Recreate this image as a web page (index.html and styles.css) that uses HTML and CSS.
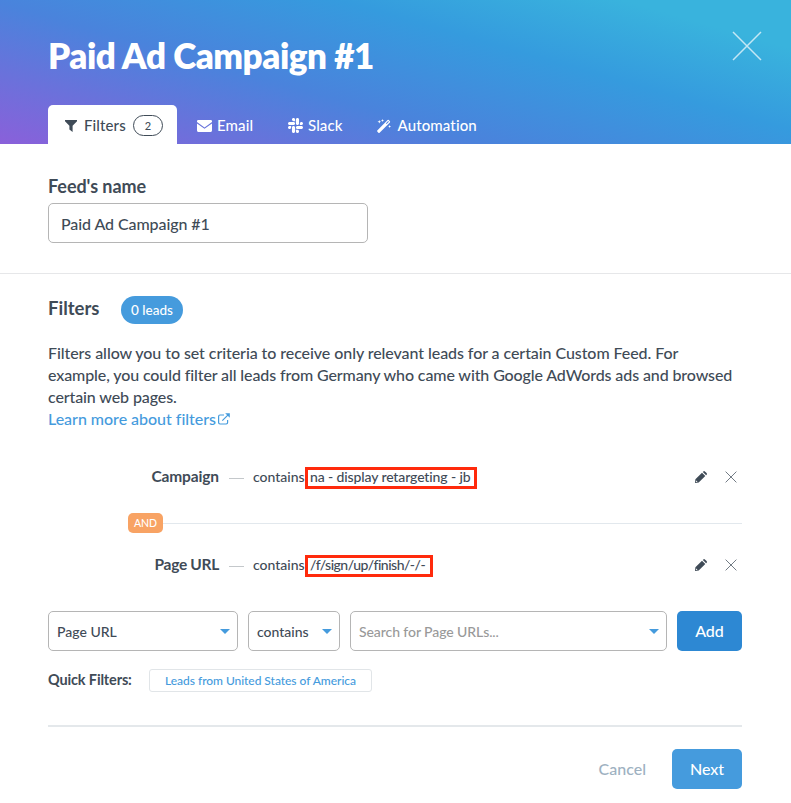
FILE: index.html
```html
<!DOCTYPE html>
<html lang="en">
<head>
<meta charset="utf-8">
<title>Paid Ad Campaign #1</title>
<link rel="stylesheet" href="styles.css">
</head>
<body>
<header class="header">
  <div class="title-row">
    <h1 class="title">Paid Ad Campaign #1</h1>
    <svg class="close" viewBox="0 0 30 30"><path d="M1 1l28 28M29 1L1 29"/></svg>
  </div>
  <nav class="tabs">
    <a class="tab tab-active"><svg class="i-funnel" viewBox="0 0 12 12"><path d="M0 0h12v1.2L7.6 5.8V12L4.4 9.4V5.8L0 1.2z"/></svg><span class="t-filters">Filters</span><span class="count">2</span></a>
    <a class="tab tab-email"><svg class="i-mail" viewBox="0 0 15 12"><path d="M1.2 0h12.6Q15 0 15 1.2v.7L7.5 7.4 0 1.9v-.7Q0 0 1.2 0zM0 3.4l7.5 5.4L15 3.4v7.2q0 1.4-1.2 1.4H1.2Q0 12 0 10.6z"/></svg><span>Email</span></a>
    <a class="tab tab-slack"><svg class="i-slack" viewBox="0 32 448 448"><path d="M94.12 315.1c0 25.9-21.16 47.06-47.06 47.06S0 341 0 315.1c0-25.9 21.16-47.06 47.06-47.06h47.06v47.06zm23.72 0c0-25.9 21.16-47.06 47.06-47.06s47.06 21.16 47.06 47.06v117.84c0 25.9-21.16 47.06-47.06 47.06s-47.06-21.16-47.06-47.06V315.1zm47.06-188.98c-25.9 0-47.06-21.16-47.06-47.06S139 32 164.9 32s47.06 21.16 47.06 47.06v47.06H164.9zm0 23.72c25.9 0 47.06 21.16 47.06 47.06s-21.16 47.06-47.06 47.06H47.06C21.16 243.96 0 222.8 0 196.9s21.16-47.06 47.06-47.06H164.9zm188.98 47.06c0-25.9 21.16-47.06 47.06-47.06 25.9 0 47.06 21.16 47.06 47.06s-21.16 47.06-47.06 47.06h-47.06V196.9zm-23.72 0c0 25.9-21.16 47.06-47.06 47.06-25.9 0-47.06-21.16-47.06-47.06V79.06c0-25.9 21.16-47.06 47.06-47.06 25.9 0 47.06 21.16 47.06 47.06V196.9zM283.1 385.88c25.9 0 47.06 21.16 47.06 47.06 0 25.9-21.16 47.06-47.06 47.06-25.9 0-47.06-21.16-47.06-47.06v-47.06h47.06zm0-23.72c-25.9 0-47.06-21.16-47.06-47.06 0-25.9 21.16-47.06 47.06-47.06h117.84c25.9 0 47.06 21.16 47.06 47.06 0 25.9-21.16 47.06-47.06 47.06H283.1z"/></svg><span>Slack</span></a>
    <a class="tab tab-auto"><svg class="i-wand" viewBox="0 0 14 14"><path fill-rule="evenodd" d="M.3 11.400L10.600 1.100q.6-.5 1.200 0l1.100 1.100q.5.6 0 1.200L2.600 13.700q-.6.5-1.200 0L.3 12.600q-.5-.6 0-1.200zM8.900 4.400l.7.7 2.300-2.300-.7-.7zM5.500 0l.4 1.100 1.100.4-1.100.4-.4 1.100-.4-1.100L4 1.500l1.100-.4zM2.300.9l.5 1.300 1.300.5-1.300.5-.5 1.300-.5-1.300L.5 2.700l1.300-.5zM12.600 6l.4 1.100 1 .4-1 .4-.4 1.100-.4-1.100-1-.4 1-.4z"/></svg><span>Automation</span></a>
  </nav>
</header>
<main>
  <section class="name-section">
    <label class="name-label" for="feed">Feed's name</label>
    <input class="name-input" id="feed" type="text" value="Paid Ad Campaign #1">
  </section>
  <section class="filters">
    <div class="filters-head"><h2 class="filters-title">Filters</h2><span class="leads">0 leads</span></div>
    <p class="desc"><span class="desc-first">Filters allow you to set criteria to receive only relevant leads for a certain Custom Feed. For</span><br>example, you could filter all leads from Germany who came with Google AdWords ads and browsed<br>certain web pages.</p>
    <a class="learn"><span>Learn more about filters</span><svg class="i-ext" viewBox="0 0 12 12"><path d="M6 2H2Q.6 2 .6 3.400v6.200Q.6 11 2 11h6.200q1.400 0 1.400-1.400V7M4.300 7.700L10.600 1.400"/><path class="solid" d="M7.200.2h4.600v4.600z"/></svg></a>
    <div class="rule">
      <span class="field">Campaign</span><span class="dash"></span><span class="op">contains</span><span class="value">na - display retargeting - jb</span>
      <span class="actions"><svg class="i-pen" viewBox="0 0 12 12"><path fill-rule="evenodd" d="M0 12l.4-3.700L7 1.700l3.300 3.300-6.600 6.600zM7.800.9l.5-.5q.8-.7 1.600 0l1.700 1.700q.7.8 0 1.600l-.5.5zM1.100 9.600l-.2 1.500 1.500-.2-.2-.5-.6-.1-.1-.6z"/></svg><svg class="i-x" viewBox="0 0 12 12"><path d="M.6.6l10.800 10.800M11.400.6L.6 11.400"/></svg></span>
    </div>
    <div class="joiner"><span class="and">AND</span><span class="joiner-line"></span></div>
    <div class="rule">
      <span class="field field-url">Page URL</span><span class="dash"></span><span class="op">contains</span><span class="value value-url">/f/sign/up/finish/-/-</span>
      <span class="actions"><svg class="i-pen" viewBox="0 0 12 12"><path fill-rule="evenodd" d="M0 12l.4-3.700L7 1.700l3.300 3.300-6.600 6.600zM7.800.9l.5-.5q.8-.7 1.600 0l1.700 1.700q.7.8 0 1.600l-.5.5zM1.100 9.600l-.2 1.500 1.500-.2-.2-.5-.6-.1-.1-.6z"/></svg><svg class="i-x" viewBox="0 0 12 12"><path d="M.6.6l10.800 10.800M11.400.6L.6 11.400"/></svg></span>
    </div>
    <div class="builder">
      <div class="select select-field"><span>Page URL</span><i class="caret"></i></div>
      <div class="select select-op"><span>contains</span><i class="caret"></i></div>
      <div class="select select-search"><span>Search for Page URLs...</span><i class="caret"></i></div>
      <button class="btn btn-add">Add</button>
    </div>
    <div class="quick"><span class="quick-label">Quick Filters:</span><a class="quick-item">Leads from United States of America</a></div>
  </section>
  <footer class="footer"><a class="cancel">Cancel</a><button class="btn btn-next">Next</button></footer>
</main>
</body>
</html>
```
FILE: styles.css
```css
* { box-sizing: border-box; }
body {
  margin: 0;
  height: 803px;
  overflow: hidden;
  background: #fff;
  color: #3f4b57;
  font: 500 15px/22px Lato, "Liberation Sans", sans-serif;
}
svg { display: block; flex: none; fill: currentColor; }
.header {
  height: 144px;
  padding: 0 29px 0 48px;
  display: flex;
  flex-direction: column;
  background: linear-gradient(16deg, #8a60da 0%, #4a83dc 38%, #359bde 65%, #39b3dd 87%);
  color: #fff;
}
.title-row { display: flex; height: 105px; justify-content: space-between; align-items: flex-start; }
.title { margin: 34px 0 0; font-size: 35px; line-height: 42px; font-weight: 800; letter-spacing: -.47px; }
.close { width: 30px; height: 30px; margin-top: 31px; fill: none; stroke: rgba(255, 255, 255, .7); stroke-width: 1.5; }
.tabs { display: flex; height: 39px; letter-spacing: .12px; }
.tab { display: flex; align-items: center; padding-top: 2px; }
.tab span { margin-top: -1px; }
.tab-active { width: 129px; padding-left: 17px; border-radius: 5px 5px 0 0; background: #fff; color: #3f4b57; }
.i-funnel { width: 12px; height: 12px; }
.tab .t-filters { width: 42px; margin-left: 7px; }
.tab .count { width: 30px; height: 21px; margin: 0 0 0 7px; border: 1px solid #3f4b57; border-radius: 11px; font-size: 11px; line-height: 19px; text-align: center; }
.tab-email { margin-left: 20px; width: 91px; gap: 5px; }
.i-mail { width: 15px; height: 12px; }
.tab-slack { width: 89px; gap: 5px; }
.i-slack { width: 15px; height: 15px; }
.tab-auto { gap: 6.500px; }
.i-wand { width: 14px; height: 14px; }

.name-section { height: 130px; padding: 31px 48px 0; border-bottom: 1px solid #e6e7e9; }
.name-label { display: block; height: 28px; font-size: 18px; line-height: 22px; font-weight: 700; letter-spacing: -.05px; }
.name-input { display: block; width: 320px; height: 40px; padding: 1px 12px 0; border: 1px solid #b5b5b5; border-radius: 5px; background: #fff; color: inherit; font: inherit; font-size: 16px; letter-spacing: -.08px; outline: 0; }

.filters { height: 451px; padding: 22px 49px 0 48px; }
.filters-head { display: flex; height: 28px; }
.filters-title { width: 73px; margin: 1px 0 0; font-size: 18.500px; line-height: 22px; font-weight: 700; }
.leads { width: 62px; height: 28px; border-radius: 14px; background: #459bdd; color: #fff; font-size: 13.500px; line-height: 28px; text-align: center; }
.desc { margin: 18px 0 0; font-size: 16px; letter-spacing: -.11px; white-space: nowrap; }
.desc-first { letter-spacing: -.07px; }
.learn { display: flex; height: 22px; align-items: center; gap: 2px; color: #459bdd; font-size: 16px; letter-spacing: -.03px; }
.i-ext { width: 12px; height: 12px; fill: none; stroke: currentColor; stroke-width: 1.200; }
.i-ext .solid { fill: currentColor; stroke: none; }
.rule { display: flex; height: 22px; align-items: center; font-size: 14px; }
.learn + .rule { margin-top: 36px; }
.field { width: 171px; text-align: right; font-size: 15.500px; line-height: 20px; margin-top: -2px; font-weight: 700; letter-spacing: -.13px; }
.field-url { letter-spacing: -.3px; }
.dash { width: 15px; height: 1px; margin: 2px 9px 0 10px; background: #c4c8cb; }
.op { width: 52px; }
.value { width: 172px; height: 22px; margin-top: 1px; padding-left: 2px; border: 3px solid #ff2a0c; line-height: 14px; letter-spacing: -.12px; white-space: nowrap; }
.value-url { width: 128px; letter-spacing: -.5px; }
.actions { display: flex; gap: 18px; margin-left: auto; margin-right: 5px; }
.i-pen { width: 12px; height: 12px; }
.i-x { width: 12px; height: 12px; fill: none; stroke: #727b84; stroke-width: 1; }
.joiner { display: flex; align-items: center; height: 20px; margin: 25px 0 21px 80px; }
.and { width: 35px; height: 20px; border-radius: 5px; background: #f8a364; color: #fff; font-size: 10.500px; line-height: 20px; text-align: center; }
.joiner-line { flex: 1; height: 1px; background: #e2e8ed; }
.builder { display: flex; gap: 10px; margin-top: 35px; }
.select { display: flex; height: 40px; padding: 1px 7px 0 8px; align-items: center; justify-content: space-between; border: 1px solid #b5b5b5; border-radius: 5px; font-size: 14px; }
.select-field { width: 190px; }
.select-op { width: 92px; }
.select-search { width: 317px; color: #999; letter-spacing: -.08px; }
.caret { border: 5px solid transparent; border-top-color: #459bdd; border-bottom: 0; }
.btn { height: 40px; padding: 0; border: 0; border-radius: 5px; color: #fff; font: 500 16px/40px Lato, "Liberation Sans", sans-serif; text-align: center; }
.btn-add { width: 65px; background: #2d88d3; }
.quick { display: flex; align-items: center; margin-top: 18px; }
.quick-label { width: 101px; margin-top: -2px; font-size: 14.500px; font-weight: 700; letter-spacing: -.15px; }
.quick-item { width: 223px; height: 23px; border: 1px solid #e1e5e8; border-radius: 3px; color: #459bdd; font-size: 12px; line-height: 22px; letter-spacing: -.04px; text-align: center; }
.footer { display: flex; margin: 0 49px 0 48px; padding-top: 22px; border-top: 2px solid #e4e8eb; align-items: center; justify-content: flex-end; gap: 26px; }
.cancel { color: #9eb1c1; font-size: 16px; }
.btn-next { width: 70px; background: #459bdd; }
```
